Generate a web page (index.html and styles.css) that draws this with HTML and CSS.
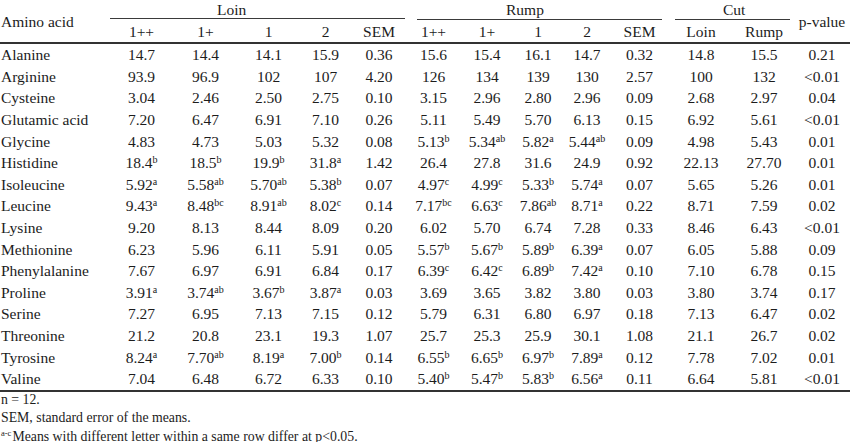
FILE: index.html
```html
<!DOCTYPE html>
<html lang="en">
<head>
<meta charset="utf-8">
<title>Amino acid table</title>
<link rel="stylesheet" href="styles.css">
</head>
<body>
<div class="page">
<table class="aa">
  <colgroup>
    <col class="w110"><col class="w63"><col class="w65"><col class="w61"><col class="w53"><col class="w54">
    <col class="w55"><col class="w52"><col class="w50"><col class="w48"><col class="w57">
    <col class="w66"><col class="w60"><col class="w56">
  </colgroup>
  <thead>
    <tr class="h1">
      <th rowspan="2" class="label">Amino acid</th>
      <th colspan="5" class="group"><div class="rule loin">Loin</div></th>
      <th colspan="5" class="group"><div class="rule rump">Rump</div></th>
      <th colspan="2" class="group"><div class="rule cut">Cut</div></th>
      <th rowspan="2" class="pv">p-value</th>
    </tr>
    <tr class="h2">
      <th>1++</th><th>1+</th><th>1</th><th>2</th><th>SEM</th>
      <th>1++</th><th>1+</th><th>1</th><th>2</th><th>SEM</th>
      <th>Loin</th><th>Rump</th>
    </tr>
  </thead>
  <tbody>
    <tr><td>Alanine</td><td>14.7</td><td>14.4</td><td>14.1</td><td>15.9</td><td>0.36</td><td>15.6</td><td>15.4</td><td>16.1</td><td>14.7</td><td>0.32</td><td>14.8</td><td>15.5</td><td>0.21</td></tr>
    <tr><td>Arginine</td><td>93.9</td><td>96.9</td><td>102</td><td>107</td><td>4.20</td><td>126</td><td>134</td><td>139</td><td>130</td><td>2.57</td><td>100</td><td>132</td><td>&lt;0.01</td></tr>
    <tr><td>Cysteine</td><td>3.04</td><td>2.46</td><td>2.50</td><td>2.75</td><td>0.10</td><td>3.15</td><td>2.96</td><td>2.80</td><td>2.96</td><td>0.09</td><td>2.68</td><td>2.97</td><td>0.04</td></tr>
    <tr><td>Glutamic acid</td><td>7.20</td><td>6.47</td><td>6.91</td><td>7.10</td><td>0.26</td><td>5.11</td><td>5.49</td><td>5.70</td><td>6.13</td><td>0.15</td><td>6.92</td><td>5.61</td><td>&lt;0.01</td></tr>
    <tr><td>Glycine</td><td>4.83</td><td>4.73</td><td>5.03</td><td>5.32</td><td>0.08</td><td>5.13<sup>b</sup></td><td>5.34<sup>ab</sup></td><td>5.82<sup>a</sup></td><td>5.44<sup>ab</sup></td><td>0.09</td><td>4.98</td><td>5.43</td><td>0.01</td></tr>
    <tr><td>Histidine</td><td>18.4<sup>b</sup></td><td>18.5<sup>b</sup></td><td>19.9<sup>b</sup></td><td>31.8<sup>a</sup></td><td>1.42</td><td>26.4</td><td>27.8</td><td>31.6</td><td>24.9</td><td>0.92</td><td>22.13</td><td>27.70</td><td>0.01</td></tr>
    <tr><td>Isoleucine</td><td>5.92<sup>a</sup></td><td>5.58<sup>ab</sup></td><td>5.70<sup>ab</sup></td><td>5.38<sup>b</sup></td><td>0.07</td><td>4.97<sup>c</sup></td><td>4.99<sup>c</sup></td><td>5.33<sup>b</sup></td><td>5.74<sup>a</sup></td><td>0.07</td><td>5.65</td><td>5.26</td><td>0.01</td></tr>
    <tr><td>Leucine</td><td>9.43<sup>a</sup></td><td>8.48<sup>bc</sup></td><td>8.91<sup>ab</sup></td><td>8.02<sup>c</sup></td><td>0.14</td><td>7.17<sup>bc</sup></td><td>6.63<sup>c</sup></td><td>7.86<sup>ab</sup></td><td>8.71<sup>a</sup></td><td>0.22</td><td>8.71</td><td>7.59</td><td>0.02</td></tr>
    <tr><td>Lysine</td><td>9.20</td><td>8.13</td><td>8.44</td><td>8.09</td><td>0.20</td><td>6.02</td><td>5.70</td><td>6.74</td><td>7.28</td><td>0.33</td><td>8.46</td><td>6.43</td><td>&lt;0.01</td></tr>
    <tr><td>Methionine</td><td>6.23</td><td>5.96</td><td>6.11</td><td>5.91</td><td>0.05</td><td>5.57<sup>b</sup></td><td>5.67<sup>b</sup></td><td>5.89<sup>b</sup></td><td>6.39<sup>a</sup></td><td>0.07</td><td>6.05</td><td>5.88</td><td>0.09</td></tr>
    <tr><td>Phenylalanine</td><td>7.67</td><td>6.97</td><td>6.91</td><td>6.84</td><td>0.17</td><td>6.39<sup>c</sup></td><td>6.42<sup>c</sup></td><td>6.89<sup>b</sup></td><td>7.42<sup>a</sup></td><td>0.10</td><td>7.10</td><td>6.78</td><td>0.15</td></tr>
    <tr><td>Proline</td><td>3.91<sup>a</sup></td><td>3.74<sup>ab</sup></td><td>3.67<sup>b</sup></td><td>3.87<sup>a</sup></td><td>0.03</td><td>3.69</td><td>3.65</td><td>3.82</td><td>3.80</td><td>0.03</td><td>3.80</td><td>3.74</td><td>0.17</td></tr>
    <tr><td>Serine</td><td>7.27</td><td>6.95</td><td>7.13</td><td>7.15</td><td>0.12</td><td>5.79</td><td>6.31</td><td>6.80</td><td>6.97</td><td>0.18</td><td>7.13</td><td>6.47</td><td>0.02</td></tr>
    <tr><td>Threonine</td><td>21.2</td><td>20.8</td><td>23.1</td><td>19.3</td><td>1.07</td><td>25.7</td><td>25.3</td><td>25.9</td><td>30.1</td><td>1.08</td><td>21.1</td><td>26.7</td><td>0.02</td></tr>
    <tr><td>Tyrosine</td><td>8.24<sup>a</sup></td><td>7.70<sup>ab</sup></td><td>8.19<sup>a</sup></td><td>7.00<sup>b</sup></td><td>0.14</td><td>6.55<sup>b</sup></td><td>6.65<sup>b</sup></td><td>6.97<sup>b</sup></td><td>7.89<sup>a</sup></td><td>0.12</td><td>7.78</td><td>7.02</td><td>0.01</td></tr>
    <tr class="last"><td>Valine</td><td>7.04</td><td>6.48</td><td>6.72</td><td>6.33</td><td>0.10</td><td>5.40<sup>b</sup></td><td>5.47<sup>b</sup></td><td>5.83<sup>b</sup></td><td>6.56<sup>a</sup></td><td>0.11</td><td>6.64</td><td>5.81</td><td>&lt;0.01</td></tr>
  </tbody>
</table>
<div class="notes">
  <p>n = 12.</p>
  <p>SEM, standard error of the means.</p>
  <p><sup>a-c</sup>Means with different letter within a same row differ at p&lt;0.05.</p>
</div>
</div>
</body>
</html>
```

FILE: styles.css
```css
html, body {
  margin: 0;
  padding: 0;
  background: #ffffff;
}
body {
  font-family: "Liberation Serif", "Times New Roman", serif;
  color: #1c1c1c;
  width: 850px;
  height: 442px;
  overflow: hidden;
}
.aa {
  border-collapse: collapse;
  table-layout: fixed;
  width: 850px;
  font-size: 15.5px;
}
.w110 { width: 110px; }
.w63 { width: 63px; }
.w65 { width: 65px; }
.w61 { width: 61px; }
.w53 { width: 53px; }
.w54 { width: 54px; }
.w55 { width: 55px; }
.w52 { width: 52px; }
.w50 { width: 50px; }
.w48 { width: 48px; }
.w57 { width: 57px; }
.w66 { width: 66px; }
.w60 { width: 60px; }
.w56 { width: 56px; }

.aa th, .aa td {
  padding: 0;
  font-family: "Liberation Serif", "Times New Roman", serif;
  font-size: 15.5px;
  font-weight: normal;
  text-align: center;
  white-space: nowrap;
  line-height: 17px;
}
.aa th.label, .aa td:first-child {
  text-align: left;
  padding-left: 1px;
}
.h1 th.group {
  height: 20px;
  vertical-align: top;
}
.rule {
  height: 19px;
  border-bottom: 1px solid #3a3a3a;
  text-align: left;
  line-height: 20px;
}
.rule.loin { padding-left: 107px; width: 295px; box-sizing: border-box; }
.rule.rump { margin: 0 6px 0 11px; padding-left: 89px; }
.rule.cut { margin: 0 4px 0 7px; padding-left: 48px; }
.h2 th {
  height: 21px;
  vertical-align: middle;
  padding-top: 1px;
}
.h2 th, th.label, th.pv {
  border-bottom: 2px solid #333;
}
th.pv {
  text-align: center;
  vertical-align: middle;
}
th.label { vertical-align: middle; }
.aa td {
  height: 21.6px;
  vertical-align: middle;
}
.aa tr.last td {
  border-bottom: 2px solid #333;
}
.aa sup {
  font-size: 10px;
  line-height: 0;
  vertical-align: 5px;
}
.notes {
  font-size: 13.8px;
  padding-left: 1px;
  margin-top: -1px;
}
.notes p {
  margin: 0;
  line-height: 18.5px;
}
.notes sup {
  font-size: 8.5px;
  line-height: 0;
  vertical-align: 5px;
  margin-right: 1px;
}
```
